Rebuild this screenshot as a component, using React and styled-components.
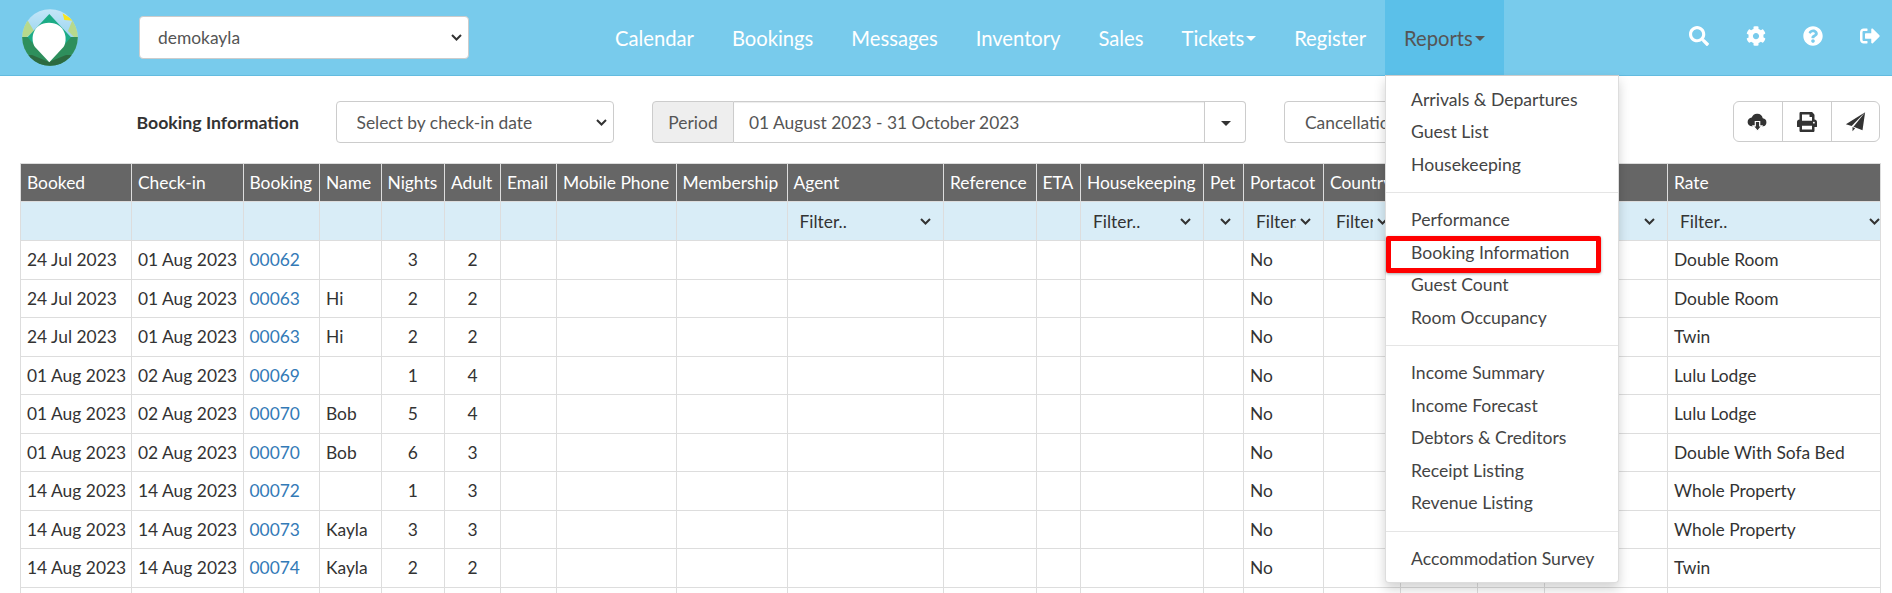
import React from 'react';
import styled, { createGlobalStyle, css } from 'styled-components';
import { FaSearch, FaCog, FaQuestionCircle, FaSignOutAlt, FaPrint } from 'react-icons/fa';

const GlobalStyle = createGlobalStyle`
  html, body {
    margin: 0;
    height: 593px;
    overflow: hidden;
    background: #fff;
    font-family: Lato, "Noto Sans", sans-serif;
    font-size: 17.4px;
    color: #333;
  }
  * { box-sizing: border-box; }
`;

const chevron = "url(\"data:image/svg+xml,%3Csvg xmlns='http://www.w3.org/2000/svg' width='11' height='7' viewBox='0 0 11 7'%3E%3Cpath d='M1 1l4.5 4.5L10 1' fill='none' stroke='%23333' stroke-width='2'/%3E%3C/svg%3E\")";

const selectBase = css`
  appearance: none;
  font-family: Lato, sans-serif;
  font-size: 17.4px;
  background-image: ${chevron};
  background-repeat: no-repeat;
`;

const NavBar = styled.nav`
  display: flex;
  align-items: stretch;
  height: 76px;
  background: #78cbec;
  border-bottom: 1px solid #63bbdf;
  padding-left: 22px;
`;

const LogoBox = styled.div`
  width: 56px;
  display: flex;
  align-items: center;
  flex: none;
`;

const AccountSelect = styled.select`
  ${selectBase}
  align-self: center;
  width: 330px;
  height: 43px;
  margin-left: 61px;
  padding-left: 18px;
  color: #555;
  background-color: #fff;
  background-position: right 6px center;
  border: 1px solid #ccc;
  border-radius: 4px;
  flex: none;
`;

const NavList = styled.div`
  display: flex;
  margin-left: 127px;
  flex: none;
`;

const NavItem = styled.a`
  position: relative;
  display: flex;
  align-items: center;
  padding: 0 19px;
  height: 75px;
  font-size: 20.2px;
  color: ${p => (p.$active ? '#555' : '#fff')};
  background: ${p => (p.$active ? '#5bc0e9' : 'transparent')};
`;

const Caret = styled.span`
  display: inline-block;
  width: 0;
  height: 0;
  margin-left: 2px;
  margin-top: 2px;
  border-top: 5px solid currentColor;
  border-left: 5px solid transparent;
  border-right: 5px solid transparent;
`;

const NavIcons = styled.div`
  display: flex;
  align-items: center;
  gap: 37px;
  margin-left: auto;
  padding-right: 12px;
  padding-bottom: 3px;
  color: #fff;
  font-size: 20px;
  svg { display: block; }
`;

const Menu = styled.div`
  position: absolute;
  top: 75px;
  left: 0;
  width: 234px;
  height: 508px;
  padding-top: 7.5px;
  background: #fff;
  border: 1px solid #ddd;
  border-top-color: #ccc;
  border-radius: 0 0 4px 4px;
  box-shadow: 0 6px 12px rgba(0, 0, 0, 0.175);
  z-index: 5;
`;

const MenuItem = styled.div`
  height: 32.5px;
  line-height: 32.5px;
  padding-left: 25px;
  font-size: 17.6px;
  color: #444;
  white-space: nowrap;
`;

const MenuDivider = styled.div`
  height: 1px;
  margin: 11px 0;
  background: #e5e5e5;
`;

const Highlight = styled.div`
  position: absolute;
  top: 160px;
  left: 0;
  width: 215px;
  height: 37px;
  border: 5px solid #f00;
  border-radius: 2px;
  box-shadow: 0 1px 3px rgba(0, 0, 0, 0.35);
`;

const Page = styled.main`
  padding: 25px 12px 0 20px;
`;

const Toolbar = styled.div`
  display: flex;
  align-items: center;
  height: 42px;
  margin-bottom: 20px;
`;

const Title = styled.div`
  width: 199px;
  margin-left: 116.5px;
  font-size: 17.7px;
  font-weight: 700;
  color: #333;
  flex: none;
  white-space: nowrap;
`;

const FieldSelect = styled.select`
  ${selectBase}
  width: ${p => p.$w}px;
  height: 42px;
  margin-left: ${p => p.$ml}px;
  padding-left: 20px;
  color: #555;
  background-color: #fff;
  background-position: right 6px center;
  border: 1px solid #ccc;
  border-radius: 4px;
  flex: none;
`;

const PeriodGroup = styled.div`
  display: flex;
  width: 594px;
  height: 42px;
  margin-left: 38.5px;
  flex: none;
`;

const PeriodLabel = styled.div`
  display: flex;
  align-items: center;
  justify-content: center;
  width: 82px;
  color: #555;
  background: #eee;
  border: 1px solid #ccc;
  border-radius: 4px 0 0 4px;
`;

const PeriodValue = styled.div`
  display: flex;
  align-items: center;
  width: 471px;
  padding-left: 15px;
  color: #555;
  border: 1px solid #ccc;
  border-left: 0;
  box-shadow: inset 0 1px 1px rgba(0, 0, 0, 0.075);
  white-space: nowrap;
`;

const PeriodCaret = styled.div`
  display: flex;
  align-items: center;
  justify-content: center;
  width: 41px;
  color: #333;
  border: 1px solid #ccc;
  border-left: 0;
  border-radius: 0 4px 4px 0;
`;

const ActionGroup = styled.div`
  display: flex;
  margin-left: auto;
  height: 41px;
  align-self: flex-start;
  border: 1px solid #ccc;
  border-radius: 6px;
  flex: none;
`;

const ActionButton = styled.div`
  display: flex;
  align-items: center;
  justify-content: center;
  width: 48.5px;
  color: #333;
  font-size: 20px;
  & + & { border-left: 1px solid #ccc; }
`;

const Grid = styled.table`
  table-layout: fixed;
  width: 1860px;
  border-collapse: collapse;
`;

const HeadCell = styled.th`
  height: 38px;
  padding: 0 6px;
  background: #666;
  color: #fff;
  font-weight: 400;
  font-size: 17.4px;
  text-align: left;
  white-space: nowrap;
  overflow: hidden;
  border: 1px solid #ddd;
`;

const FilterCell = styled.td`
  height: 39px;
  padding: 0;
  background: #d9edf7;
  border: 1px solid #ddd;
  overflow: hidden;
`;

const FilterSelect = styled.select`
  ${selectBase}
  display: block;
  width: 100%;
  height: 30px;
  padding: 0 ${p => (p.$wide ? 14 : 27)}px 0 12px;
  color: #333;
  background-color: transparent;
  background-position: right ${p => (p.$wide ? 0 : 12)}px center;
  border: 0;
`;

const Cell = styled.td`
  height: 38.5px;
  padding: 0 6px;
  font-size: 17.4px;
  color: #333;
  text-align: ${p => (p.$center ? 'center' : 'left')};
  white-space: nowrap;
  overflow: hidden;
  border: 1px solid #ddd;
`;

const BookingLink = styled.a`
  color: #337ab7;
`;

const Col = styled.col`
  width: ${p => p.$w}px;
`;

const columns = [
  ['Booked', 111], ['Check-in', 111.5], ['Booking', 76.5], ['Name', 61.5], ['Nights', 63.5],
  ['Adult', 56], ['Email', 56], ['Mobile Phone', 119.5], ['Membership', 111], ['Agent', 156.5],
  ['Reference', 92.5], ['ETA', 44.5], ['Housekeeping', 123], ['Pet', 40], ['Portacot', 80],
  ['Country', 77], ['Source', 77], ['Group', 67], ['Account', 123], ['Rate', 213],
];

const filters = { Agent: 'Filter..', Housekeeping: 'Filter..', Pet: '', Portacot: 'Filter..', Country: 'Filter..', Source: 'Filter..', Group: 'Filter..', Account: '', Rate: 'Filter..' };

const rows = [
  ['24 Jul 2023', '01 Aug 2023', '00062', '', 3, 2, 'Double Room'],
  ['24 Jul 2023', '01 Aug 2023', '00063', 'Hi', 2, 2, 'Double Room'],
  ['24 Jul 2023', '01 Aug 2023', '00063', 'Hi', 2, 2, 'Twin'],
  ['01 Aug 2023', '02 Aug 2023', '00069', '', 1, 4, 'Lulu Lodge'],
  ['01 Aug 2023', '02 Aug 2023', '00070', 'Bob', 5, 4, 'Lulu Lodge'],
  ['01 Aug 2023', '02 Aug 2023', '00070', 'Bob', 6, 3, 'Double With Sofa Bed'],
  ['14 Aug 2023', '14 Aug 2023', '00072', '', 1, 3, 'Whole Property'],
  ['14 Aug 2023', '14 Aug 2023', '00073', 'Kayla', 3, 3, 'Whole Property'],
  ['14 Aug 2023', '14 Aug 2023', '00074', 'Kayla', 2, 2, 'Twin'],
];

const menuGroups = [
  ['Arrivals & Departures', 'Guest List', 'Housekeeping'],
  ['Performance', 'Booking Information', 'Guest Count', 'Room Occupancy'],
  ['Income Summary', 'Income Forecast', 'Debtors & Creditors', 'Receipt Listing', 'Revenue Listing'],
  ['Accommodation Survey'],
];

const Logo = () => (
  <svg width="56" height="57" viewBox="0 0 56 57">
    <defs>
      <clipPath id="logoClip"><ellipse cx="28" cy="28.5" rx="27.8" ry="28.3" /></clipPath>
      <linearGradient id="logoSky" x1="0" y1="0" x2="0" y2="1">
        <stop offset="0" stopColor="#c4e6f8" />
        <stop offset="0.5" stopColor="#9ad5ef" />
      </linearGradient>
    </defs>
    <g clipPath="url(#logoClip)">
      <rect width="56" height="57" fill="url(#logoSky)" />
      <polygon points="0,12 6,12 12,22 0,32" fill="#b7d98c" />
      <polygon points="56,12 50,12 46,22 56,32" fill="#b7d98c" />
      <polygon points="0,28 56,28 56,57 0,57" fill="#2e8f5c" />
      <polygon points="27.3,5 49,28.3 27.3,53 5.6,28.3" fill="#1bab85" />
      <polygon points="0,46 10,46 27,53 44,46 56,46 56,57 0,57" fill="#2c6a40" />
      <polygon points="40.6,4.3 52.3,11.7 42.3,11" fill="#f7e51d" />
      <path d="M27.3 53.3 L13 38 C7.5 30 11 13.7 27 13.7 C43 13.7 46.5 30 41.5 38 Z" fill="#fff" />
    </g>
  </svg>
);

const CloudDownload = () => (
  <svg width="21" height="21" viewBox="0 0 24 24">
    <path d="M6 17.5a5 5 0 0 1-.6-10A6.6 6.6 0 0 1 18 8.2a4.7 4.7 0 0 1 .3 9.3z" fill="#333" />
    <path d="M9.5 12h5v5h2.5L12 23l-5-6h2.5z" fill="#333" stroke="#fff" strokeWidth="1.4" />
  </svg>
);

const SendPlane = () => (
  <svg width="21" height="21" viewBox="0 0 24 24">
    <path d="M23 1.5L1 15l6.6 2.2z" fill="#333" />
    <path d="M23 1.5L9.5 18.2l1 0L20 22z" fill="#333" />
    <path d="M8.6 18.4v4.6l3-3.2z" fill="#333" />
  </svg>
);

const App = () => (
  <>
    <GlobalStyle />
    <NavBar>
      <LogoBox><Logo /></LogoBox>
      <AccountSelect defaultValue="demokayla">
        <option>demokayla</option>
      </AccountSelect>
      <NavList>
        <NavItem>Calendar</NavItem>
        <NavItem>Bookings</NavItem>
        <NavItem>Messages</NavItem>
        <NavItem>Inventory</NavItem>
        <NavItem>Sales</NavItem>
        <NavItem>Tickets<Caret /></NavItem>
        <NavItem>Register</NavItem>
        <NavItem $active>
          Reports<Caret />
          <Menu>
            {menuGroups.map((group, i) => (
              <React.Fragment key={i}>
                {i > 0 && <MenuDivider />}
                {group.map(label => <MenuItem key={label}>{label}</MenuItem>)}
              </React.Fragment>
            ))}
            <Highlight />
          </Menu>
        </NavItem>
      </NavList>
      <NavIcons>
        <FaSearch />
        <FaCog />
        <FaQuestionCircle />
        <FaSignOutAlt />
      </NavIcons>
    </NavBar>
    <Page>
      <Toolbar>
        <Title>Booking Information</Title>
        <FieldSelect $w={278} $ml={0}><option>Select by check-in date</option></FieldSelect>
        <PeriodGroup>
          <PeriodLabel>Period</PeriodLabel>
          <PeriodValue>01 August 2023 - 31 October 2023</PeriodValue>
          <PeriodCaret><Caret /></PeriodCaret>
        </PeriodGroup>
        <FieldSelect $w={320} $ml={38}><option>Cancellations excluded</option></FieldSelect>
        <ActionGroup>
          <ActionButton><CloudDownload /></ActionButton>
          <ActionButton><FaPrint /></ActionButton>
          <ActionButton><SendPlane /></ActionButton>
        </ActionGroup>
      </Toolbar>
      <Grid>
        <colgroup>
          {columns.map(([name, w]) => <Col key={name} $w={w} />)}
        </colgroup>
        <thead>
          <tr>
            {columns.map(([name]) => <HeadCell key={name}>{name}</HeadCell>)}
          </tr>
        </thead>
        <tbody>
          <tr>
            {columns.map(([name]) => (
              <FilterCell key={name}>
                {name in filters && (
                  <FilterSelect $wide={name === 'Rate'}>
                    <option>{filters[name]}</option>
                  </FilterSelect>
                )}
              </FilterCell>
            ))}
          </tr>
          {rows.map(([booked, checkIn, ref, guest, nights, adults, rate], i) => (
            <tr key={i}>
              <Cell>{booked}</Cell>
              <Cell>{checkIn}</Cell>
              <Cell><BookingLink>{ref}</BookingLink></Cell>
              <Cell>{guest}</Cell>
              <Cell $center>{nights}</Cell>
              <Cell $center>{adults}</Cell>
              {columns.slice(6).map(([name]) => (
                <Cell key={name}>
                  {name === 'Portacot' ? 'No' : name === 'Rate' ? rate : ''}
                </Cell>
              ))}
            </tr>
          ))}
          <tr>
            {columns.map(([name]) => <Cell key={name} />)}
          </tr>
        </tbody>
      </Grid>
    </Page>
  </>
);

export default App;
